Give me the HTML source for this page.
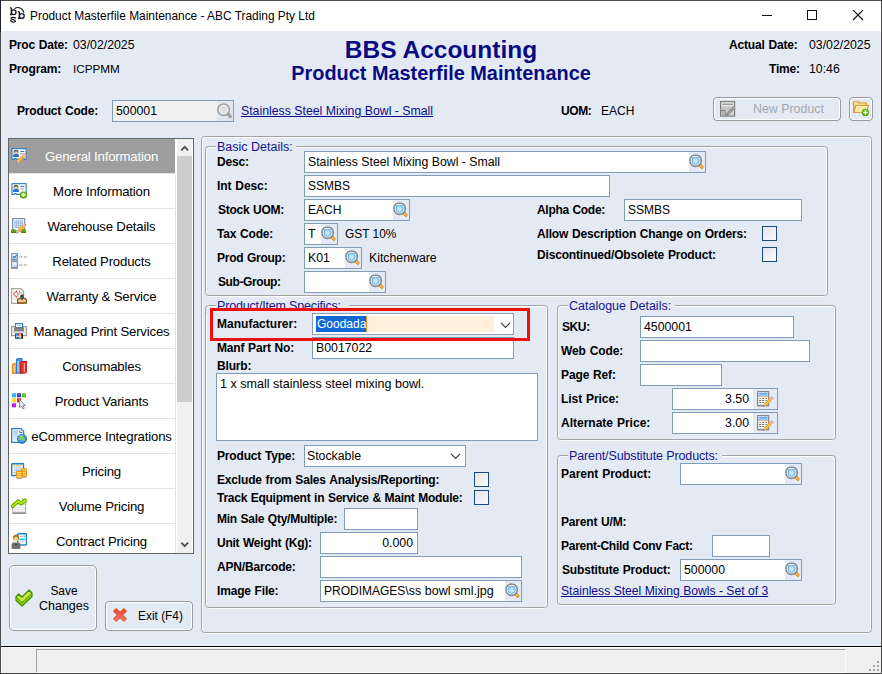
<!DOCTYPE html>
<html><head><meta charset="utf-8"><title>Product Masterfile Maintenance</title>
<style>
*{box-sizing:border-box;margin:0;padding:0}
html,body{width:882px;height:674px;overflow:hidden;background:#e3eaf4}
body{font-family:"Liberation Sans",sans-serif;font-size:12.300px;color:#000;position:relative}
.a{position:absolute;white-space:nowrap}
.lb{position:absolute;white-space:nowrap;font-weight:700;font-size:12px;letter-spacing:-.17px;word-spacing:.6px;line-height:14px;color:#000}
.tx{position:absolute;white-space:nowrap;font-size:12.300px;line-height:14px;color:#000}
.in{position:absolute;background:#fff;border:1px solid #7f9db9;font-size:12.300px;line-height:20px;padding-left:3px;white-space:nowrap;overflow:hidden}
.in.r{text-align:right;padding-right:4px}
.lk{position:absolute;color:#0a0a8c;text-decoration:underline;font-size:12.300px;line-height:14px;white-space:nowrap}
.gb{position:absolute;border:1px solid #a2a2a2;border-radius:3.500px}
.gbw{position:absolute;border:1px solid #fff;border-radius:3.500px}
.lg{position:absolute;padding-left:1px;background:#e3eaf4;color:#15158f;font-size:12.500px;line-height:16px;height:16px;white-space:nowrap;overflow:hidden}
.cb{position:absolute;width:15px;height:15px;border:1px solid #1c4a80;background:linear-gradient(135deg,#e4e4e4,#fbfbfb)}
.mg{position:absolute;right:0;top:0;width:16px;height:20px;background:#e3eaf4}
.li{position:absolute;left:9px;width:166px;height:35px;border-bottom:1px solid #e3e3e3;font-size:13.200px;letter-spacing:-.18px;line-height:36px;text-align:center;padding-left:19px;white-space:nowrap;background:#fff}
.li.sel{background:#9e9e9e;color:#fff}
.btn{position:absolute;border:1px solid #9a9a9a;border-radius:4px;background:#e3eaf4;box-shadow:inset 0 0 0 1px #fff}
</style></head><body>
<div class="a" style="left:0;top:0;width:882px;height:31px;background:#fff"></div>
<svg class="a" style="left:0;top:0" width="32" height="28" viewBox="0 0 32 28"><g fill="none" stroke="#1a1a1a" stroke-width="1.350"><path d="M11.400 7.800v6.700M9.900 7.900h1.500M9.900 14.450h2.200"/><ellipse cx="13.700" cy="12.200" rx="2.300" ry="2.350"/><path d="M19.400 11.600v6.700M17.900 11.700h1.500M17.900 18.250h2.200"/><ellipse cx="21.800" cy="16" rx="2.400" ry="2.400"/><path d="M15.200 18.300c-.4-1.200-4.100-1.500-4.100.2 0 1.600 4.300.7 4.300 2.400 0 1.500-3.900 1.500-4.600-.1M15.200 17v1.600M10.800 19.800v1.700" stroke-width="1.250"/><path d="M14.500 8.700c2.700-2 7.400-1.900 9.400 3.900" stroke-width="1.150"/></g></svg>
<div class="a" style="left:30px;top:8px;font-size:11.900px;line-height:16px;color:#000">Product Masterfile Maintenance - ABC Trading Pty Ltd</div>
<svg class="a" style="left:761px;top:10px" width="12" height="12"><path d="M1 5.500h10" stroke="#111" stroke-width="1"/></svg>
<svg class="a" style="left:806px;top:10px" width="12" height="12"><rect x="1.500" y=".500" width="9" height="9" fill="none" stroke="#111" stroke-width="1"/></svg>
<svg class="a" style="left:852px;top:10px" width="12" height="12"><path d="M1 0l10 10M11 0L1 10" stroke="#111" stroke-width="1.100"/></svg>
<div class="lb" style="left:9px;top:38px;">Proc Date:</div>
<div class="tx" style="left:73px;top:38px;">03/02/2025</div>
<div class="lb" style="left:9px;top:62px;">Program:</div>
<div class="tx" style="left:73px;top:62px;font-size:11.700px">ICPPMM</div>
<div class="a" style="left:0;width:882px;top:34.500px;text-align:center;font-weight:700;font-size:24.500px;line-height:30px;color:#0a0a82">BBS Accounting</div>
<div class="a" style="left:0;width:882px;top:61px;text-align:center;font-weight:700;font-size:19.900px;line-height:24px;color:#0a0a82">Product Masterfile Maintenance</div>
<div class="lb" style="left:729px;top:38px;">Actual Date:</div>
<div class="tx" style="left:809px;top:38px;">03/02/2025</div>
<div class="lb" style="left:769px;top:62px;">Time:</div>
<div class="tx" style="left:809px;top:62px;">10:46</div>
<div class="lb" style="left:17px;top:104px;">Product Code:</div>
<div class="in" style="left:112px;top:100px;width:122px;height:22px;background:#f0f0f0;box-shadow:inset 0 0 0 1px #edf1f7">500001<div class="mg" style="background:#dfe6f0"><svg class="a" style="left:0px;top:0px" width="16" height="20" viewBox="0 0 16 20" ><path d="M10.900 12.800l2.300 2.700" stroke="#a0a0a0" stroke-width="3.400" stroke-linecap="round"/><circle cx="6.600" cy="8.700" r="5.700" fill="#f6f6f6" stroke="#a0a0a0" stroke-width="1.600"/><circle cx="6.600" cy="8.700" r="3.900" fill="#e0e0e0"/></svg></div></div>
<div class="lk" style="left:241px;top:104px">Stainless Steel Mixing Bowl - Small</div>
<div class="lb" style="left:561px;top:104px;letter-spacing:-0.4px;">UOM:</div>
<div class="tx" style="left:601px;top:104px;font-size:12px">EACH</div>
<div class="btn" style="left:713px;top:97px;width:128px;height:24px"></div>
<svg class="a" style="left:720px;top:101px" width="16" height="16" viewBox="0 0 16 16"><rect x=".600" y=".600" width="14" height="14.500" fill="#d4d4d4" stroke="#7c7c7c" stroke-width="1.200"/><rect x="1.500" y="1.500" width="12.200" height="3.800" fill="#ececec"/><rect x="2.200" y="2.500" width="10.800" height="1.600" fill="#a0a0a0"/><rect x="1.500" y="5.500" width="12.200" height="4" fill="#c4c4c4"/><path d="M1 9.500h4.200v5" fill="none" stroke="#7c7c7c" stroke-width="1"/><rect x="1.500" y="10.200" width="3.200" height="4.200" fill="#b0b0b0"/><path d="M6.800 13.700l7.400-7.400" stroke="#8a8a8a" stroke-width="3"/><path d="M6.800 13.700l7.400-7.400" stroke="#dedede" stroke-width="1" stroke-dasharray="1 .6"/><path d="M5.800 14.800l1-2 1 1z" fill="#555"/></svg>
<div class="tx" style="left:753px;top:101.5px;color:#a3a7b2;font-size:12.400px">New Product</div>
<div class="btn" style="left:849px;top:97px;width:24px;height:24px"></div>
<svg class="a" style="left:853px;top:101px" width="17" height="16" viewBox="0 0 17 16"><path d="M.6 11.500V.8h4.500l1 1.200h7.300v2.300" fill="#fbe08a" stroke="#d9963a" stroke-width="1.200" stroke-linejoin="round"/><path d="M.6 11.500l2.300-7h12.600l-2.300 7z" fill="#fce9a0" stroke="#d9963a" stroke-width="1.200" stroke-linejoin="round"/><path d="M1.500 2h3.200M3.300 5.500h10.800" stroke="#fff6cc" stroke-width=".9"/><circle cx="12.4" cy="11.4" r="3.600" fill="#4f9f10"/><circle cx="12.4" cy="10.9" r="2.800" fill="#6cc01c"/><path d="M10.4 11.4h4M12.4 9.4v4" stroke="#fff" stroke-width="1.400"/></svg>
<div class="a" style="left:8px;top:138px;width:186px;height:416px;border:1px solid #666;background:#fff"></div>
<div class="a" style="left:0;top:139px;width:193px;height:414px;overflow:hidden">
<div class="li sel" style="top:0px">General Information<svg class="a" style="left:2px;top:9px" width="16" height="16" viewBox="0 0 16 16" ><path d="M1 .6h14.100v10.800H13.500l-.5-.8h-1.500l-.5.800H5.500l-.5-.8H3.500l-.5.800H1z" fill="#fff" stroke="#3b83c6" stroke-width="1.200" stroke-linejoin="round"/><rect x="2" y="2" width="6" height="7" fill="#bfe0f7"/><circle cx="5" cy="3.600" r="1.900" fill="#7a3d10"/><circle cx="5" cy="4.600" r="1.300" fill="#f4c98a"/><path d="M2.200 9V7.300c0-.7 1.200-1.200 2.800-1.200s2.800.5 2.800 1.200V9z" fill="#2b6fce"/><path d="M9.300 3.500h4" stroke="#2c7bd0" stroke-width="1"/><path d="M9.300 6h3.500" stroke="#8a7f7a" stroke-width="0.900"/><path d="M6.200 12.300L12.300 6.200l2.300 2.300L8.500 14.600z" fill="#f6a623"/><path d="M7.300 13.400l6.100-6.100" stroke="#ffd27a" stroke-width="0.900"/><path d="M12.300 6.200l1.300-1.300 2.300 2.300-1.300 1.300z" fill="#ef8fc4"/><path d="M11.600 6.900l.7-.7 2.300 2.300-.7.700z" fill="#d0d0d0"/><path d="M6.200 12.300L5.300 15.500l3.200-.9z" fill="#e3c08f"/><path d="M5.300 15.500l.4-1.400 1 1z" fill="#444"/></svg></div>
<div class="li" style="top:35px">More Information<svg class="a" style="left:2px;top:9px" width="16" height="16" viewBox="0 0 16 16" ><path d="M1 .6h14.100v10.800H13.500l-.5-.8h-1.500l-.5.800H5.500l-.5-.8H3.500l-.5.800H1z" fill="#fff" stroke="#3b83c6" stroke-width="1.200" stroke-linejoin="round"/><rect x="2" y="2" width="6" height="7" fill="#bfe0f7"/><circle cx="5" cy="3.600" r="1.900" fill="#7a3d10"/><circle cx="5" cy="4.600" r="1.300" fill="#f4c98a"/><path d="M2.200 9V7.300c0-.7 1.200-1.200 2.800-1.200s2.800.5 2.800 1.200V9z" fill="#2b6fce"/><path d="M9.300 3.500h4" stroke="#2c7bd0" stroke-width="1"/><path d="M9.300 6h3.500" stroke="#8a7f7a" stroke-width="0.900"/><circle cx="12.5" cy="12" r="3.600" fill="#4f9f10"/><circle cx="12.5" cy="11.5" r="2.800" fill="#6cc01c"/><path d="M10.5 12h4M12.5 10v4" stroke="#fff" stroke-width="1.400"/></svg></div>
<div class="li" style="top:70px">Warehouse Details<svg class="a" style="left:2px;top:9px" width="16" height="16" viewBox="0 0 16 16" ><rect x="1.600" y=".600" width="12" height="12.500" fill="#f3f7fd" stroke="#7892b4" stroke-width="1.200"/><rect x="3.300" y="2.500" width="8.800" height="7.500" rx="1" fill="#9fb3d6"/><g fill="#e9f0fc"><rect x="4.1" y="3.6" width="1.200" height="1.200"/><rect x="6.1" y="3.6" width="1.200" height="1.200"/><rect x="8.1" y="3.6" width="1.200" height="1.200"/><rect x="10.1" y="3.6" width="1.200" height="1.200"/><rect x="4.1" y="5.7" width="1.200" height="1.200"/><rect x="6.1" y="5.7" width="1.200" height="1.200"/><rect x="8.1" y="5.7" width="1.200" height="1.200"/><rect x="10.1" y="5.7" width="1.200" height="1.200"/><rect x="4.1" y="7.8" width="1.200" height="1.200"/><rect x="6.1" y="7.8" width="1.200" height="1.200"/><rect x="8.1" y="7.8" width="1.200" height="1.200"/><rect x="10.1" y="7.8" width="1.200" height="1.200"/></g><path d="M0 14.500v-1.600c0-1.200 1.200-1.800 2.500-1.800s2.500.6 2.500 1.800v1.600zM10 14.500v-1.600c0-1.200 1-1.800 2.500-1.800s2.500.6 2.500 1.800v1.600z" fill="#62a01c"/><path d="M0 14.500h5M10 14.500h5" stroke="#4d8510" stroke-width="1"/><path d="M6.200 12.300L12.300 6.200l2.300 2.300L8.500 14.600z" fill="#f6a623"/><path d="M7.300 13.400l6.100-6.100" stroke="#ffd27a" stroke-width="0.900"/><path d="M12.300 6.200l1.300-1.300 2.300 2.300-1.300 1.300z" fill="#ef8fc4"/><path d="M11.600 6.900l.7-.7 2.300 2.300-.7.700z" fill="#d0d0d0"/><path d="M6.200 12.300L5.300 15.500l3.200-.9z" fill="#e3c08f"/><path d="M5.300 15.500l.4-1.400 1 1z" fill="#444"/></svg></div>
<div class="li" style="top:105px">Related Products<svg class="a" style="left:2px;top:9px" width="16" height="16" viewBox="0 0 16 16" ><defs><linearGradient id="cbg4" x1="0" y1="0" x2="0" y2="1"><stop offset="0" stop-color="#fff"/><stop offset="1" stop-color="#c4d4ea"/></linearGradient></defs><rect x=".600" y=".600" width="5.800" height="5.800" fill="url(#cbg4)" stroke="#7f9cc4" stroke-width="1.200"/><rect x=".600" y="8.600" width="5.800" height="5.800" fill="url(#cbg4)" stroke="#7f9cc4" stroke-width="1.200"/><path d="M0 7.300h7M0 15.400h7" stroke="#8d8d8d" stroke-width="1"/><path d="M2 3.300l1.400 1.400L5.800 2.200" fill="none" stroke="#1f6fc8" stroke-width="1.200"/><path d="M8 4h4M13 4h3M8 12h4M13 12h3" stroke="#8a8a8a" stroke-width="1.200" stroke-dasharray="1.300 .4"/></svg></div>
<div class="li" style="top:140px">Warranty &amp; Service<svg class="a" style="left:2px;top:9px" width="16" height="16" viewBox="0 0 16 16" ><path d="M.6.600h9.400l2.600 2.800V15.400H.6z" fill="#fff" stroke="#a3a3a3" stroke-width="1.200"/><path d="M2.300 2.500h4v10h-4z" fill="#ececec"/><path d="M8.500 2.300v2.500h3" fill="none" stroke="#a3a3a3" stroke-width="1"/><path d="M5.300 3.300l2.700 2.800-2.600 2.800-3-2.700z" fill="#eafcff" stroke="#ef1c1c" stroke-width="1.100" stroke-dasharray="1 .7"/><rect x="9.400" y="6.200" width="3.300" height="5" rx="1.500" fill="#3c3f45"/><path d="M6.600 15v-2.400c0-1.400 1-2.200 2.400-2.200h4.100c1.400 0 2.400.8 2.400 2.200V15z" fill="#f0c88c" stroke="#8a5514" stroke-width="1.300"/><rect x="10.300" y="9" width="1.500" height="3" fill="#27598c"/></svg></div>
<div class="li" style="top:175px">Managed Print Services<svg class="a" style="left:2px;top:9px" width="16" height="16" viewBox="0 0 16 16" ><rect x=".600" y="3.600" width="14.800" height="9" fill="#f0f0f0" stroke="#9c9c9c" stroke-width="1.200"/><rect x="4.500" y=".600" width="7" height="4" fill="#fff" stroke="#3c83c8" stroke-width="1.200"/><path d="M6.300 2.600h3.500" stroke="#9cc6ee" stroke-width="0.900"/><rect x="3" y="4.500" width="10" height="4" fill="#7b7b7b"/><path d="M3 6.300h10" stroke="#999" stroke-width="0.700"/><rect x="2.500" y="8.500" width="11" height="1.500" fill="#d0d0d8"/><rect x="4" y="10.500" width="8" height="5" fill="#222"/><rect x="4.600" y="11" width="1.800" height="4" fill="#00a2f2"/><rect x="6.400" y="11" width="1.800" height="4" fill="#ee0a9a"/><rect x="8.200" y="11" width="1.800" height="4" fill="#ffe600"/><path d="M5 13.200h5.500" stroke="#fff" stroke-width="1"/><path d="M4 15.400h8" stroke="#3c83c8" stroke-width="1"/></svg></div>
<div class="li" style="top:210px">Consumables<svg class="a" style="left:2px;top:9px" width="16" height="16" viewBox="0 0 16 16" ><path d="M1 15.500h13.500" stroke="#8aa" stroke-width="0.800"/><path d="M1.500 15V7c0-1 .8-1.500 2-1.500s2 .5 2 1.500v8z" fill="#f8b34a" stroke="#ee8208" stroke-width="1.200"/><path d="M3.300 8v6.500" stroke="#ffd898" stroke-width="1"/><path d="M5.500 15V2l1-1.500h4.500V15z" fill="#4d9be0" stroke="#2b78c4" stroke-width="1.200"/><path d="M7 3v11.500" stroke="#bfe2ff" stroke-width="1.200"/><path d="M9.700 15V5l1.300-1.500h4.300V14l-1 1z" fill="#f0392b" stroke="#d60d0d" stroke-width="1.200"/><path d="M13.400 5v9.500" stroke="#ffb4ae" stroke-width="1"/></svg></div>
<div class="li" style="top:245px">Product Variants<svg class="a" style="left:2px;top:9px" width="16" height="16" viewBox="0 0 16 16" ><rect x="1" y=".300" width="4" height="4" fill="#22aaff"/><rect x="6" y=".300" width="4" height="4" fill="#2a35cf"/><rect x="11" y=".300" width="4" height="4" fill="#66bb0a"/><rect x="1" y="5.300" width="4" height="4" fill="#ffd80a"/><rect x="6" y="5.300" width="4" height="4" fill="#e8330f"/><rect x="1" y="10.300" width="4" height="4" fill="#aa18ee"/><g fill="#ffffff" fill-opacity=".45"><rect x="2.200" y="1.500" width="1.600" height="1"/><rect x="7.200" y="1.500" width="1.600" height="1"/><rect x="12.200" y="1.500" width="1.600" height="1"/><rect x="2.200" y="6.500" width="1.600" height="1"/><rect x="2.200" y="11.500" width="1.600" height="1"/></g><path d="M8.500 6.500v8.300l2-1.700 1.300 2.800 1.500-.7-1.300-2.700h2.500z" fill="#e4e8ea" stroke="#8a9094" stroke-width="1"/></svg></div>
<div class="li" style="top:280px">eCommerce Integrations<svg class="a" style="left:2px;top:9px" width="16" height="16" viewBox="0 0 16 16" ><defs><linearGradient id="pwg9" x1="0" y1="0" x2="0" y2="1"><stop offset="0" stop-color="#9fcbe6"/><stop offset="1" stop-color="#e8f4fb"/></linearGradient><radialGradient id="glb9" cx=".4" cy=".35" r=".7"><stop offset="0" stop-color="#7cc6ff"/><stop offset="1" stop-color="#1a78d8"/></radialGradient></defs><path d="M.7.700h9.300l2.700 2.700V14.300H.7z" fill="#fff" stroke="#2b7ec2" stroke-width="1.300"/><rect x="2.300" y="2.400" width="4.800" height="10.300" fill="url(#pwg9)"/><path d="M8.800 2.200v2.300h2.500" fill="none" stroke="#2b7ec2" stroke-width="1"/><circle cx="11" cy="10.800" r="4.600" fill="url(#glb9)" stroke="#1a6ec6" stroke-width=".8"/><path d="M9 8.300c1-.8 2.500-.9 3.300-.2.500.6-.3 1.200-.2 1.800.2.700 1.700.5 1.900 1.300.2.900-.8 2.100-1.500 2.300-.6.100-.5-1-1-1.500-.5-.6-1.500-.6-2-1.400-.4-.7-.9-1.800-.5-2.300z" fill="#8ed422"/><circle cx="8.100" cy="11.500" r=".8" fill="#8ed422"/></svg></div>
<div class="li" style="top:315px">Pricing<svg class="a" style="left:2px;top:9px" width="16" height="16" viewBox="0 0 16 16" ><rect x=".700" y=".700" width="11.800" height="11.800" fill="#fff" stroke="#1c7cc6" stroke-width="1.400" rx=".5"/><path d="M2.300 2.600h2M5.300 2.600h2M8.300 2.600h2" stroke="#f8b818" stroke-width="1.200"/><path d="M2.300 4.800h8.500M2.300 7.200h8.500M2.300 9.600h8.500" stroke="#9cc4ec" stroke-width="1"/><path d="M5 3v8M8 3v8" stroke="#9cc4ec" stroke-width=".8"/><rect x="3.300" y="4.300" width="1.500" height="1.200" fill="#d8ecff"/><rect x="6" y="4.300" width="1.500" height="1.200" fill="#d8ecff"/><g><rect x="10.200" y="5.500" width="5.500" height="8" rx="1.200" fill="#f4a01e" stroke="#ee8a0a" stroke-width=".8"/><path d="M11.200 7h3.500M11.200 9.500h3.500M11.200 12h3.500" stroke="#ffe060" stroke-width="1.200"/><rect x="5.300" y="8" width="6" height="7" rx="1.200" fill="#f4a01e" stroke="#ee8a0a" stroke-width=".8"/><path d="M6.300 9.500h4M6.300 11.700h4M6.300 13.800h4" stroke="#ffe868" stroke-width="1.200"/><path d="M5.500 15.700h5.500M12 14.200h3.500" stroke="#8c8c8c" stroke-width=".8"/></g></svg></div>
<div class="li" style="top:350px">Volume Pricing<svg class="a" style="left:2px;top:9px" width="16" height="16" viewBox="0 0 16 16" ><rect x="1.600" y="6" width="13" height="9" fill="#fff" stroke="#b4b4b4" stroke-width="1.200"/><path d="M2.500 9.500h11.500M2.500 11.500h11.500M2.500 13.300h11.500" stroke="#d8d8d8" stroke-width=".8"/><path d="M1.600 15.200h13" stroke="#8e8e8e" stroke-width="1.600"/><path d="M1.800 8.300l5.300-5.300 3 2.700 3.400-3.200" fill="none" stroke="#5a9a00" stroke-width="3.600" stroke-linejoin="round" stroke-linecap="round"/><path d="M10.500.800h5v5z" fill="#5a9a00"/><path d="M1.800 8.300l5.300-5.300 3 2.700 3.400-3.200" fill="none" stroke="#b6ea0a" stroke-width="1.800" stroke-linejoin="round" stroke-linecap="round"/><path d="M12 1.700h2.600v2.600z" fill="#c6f41c"/></svg></div>
<div class="li" style="top:385px">Contract Pricing<svg class="a" style="left:2px;top:9px" width="16" height="16" viewBox="0 0 16 16" ><rect x="6.700" y=".700" width="8.700" height="11.300" rx="1" fill="#fff" stroke="#1c86c8" stroke-width="1.400"/><path d="M8.500 3.300h3.500" stroke="#b89aa0" stroke-width=".9"/><circle cx="13.300" cy="3.300" r=".9" fill="#1ec4f0"/><rect x="8.300" y="5.400" width="5.700" height="1.800" fill="#1ec4f0"/><path d="M8.500 8.700h4.500" stroke="#e0a0a0" stroke-width=".7"/><path d="M.6 15.300v-3.500c0-1.500 1.200-2.400 2.400-2.600h4c1.200.2 2.400 1.100 2.400 2.600v3.500z" fill="#6e6e6e"/><path d="M.6 15.600h8.800" stroke="#555" stroke-width=".8"/><path d="M3.500 9.200L5 12l1.500-2.800z" fill="#fff"/><path d="M4.600 9.500h.8l.3 2.300-.7.700-.7-.7z" fill="#111"/><ellipse cx="5" cy="4.800" rx="2.900" ry="3" fill="#b4651a"/><ellipse cx="5" cy="6.200" rx="2" ry="2.400" fill="#f6d680"/><path d="M2.300 4.500c.5-2 4.800-2.300 5.400 0-1.500-.9-3.500-1-5.400 0z" fill="#c87820"/></svg></div>
</div>
<div class="a" style="left:175px;top:139px;width:18px;height:414px;background:#fff"></div><div class="a" style="left:177px;top:139px;width:15px;height:414px;background:#f0f0f0"></div>
<div class="a" style="left:175px;top:174px;width:1px;height:379px;background:#e3e3e3"></div>
<div class="a" style="left:177px;top:156px;width:15px;height:246px;background:#cdcdcd"></div>
<svg class="a" style="left:180px;top:144px" width="10" height="8"><path d="M1.300 6.300l3.400-3.400 3.400 3.400" fill="none" stroke="#505050" stroke-width="1.900"/></svg>
<svg class="a" style="left:180px;top:541px" width="10" height="8"><path d="M1.300 1.700l3.400 3.400 3.400-3.400" fill="none" stroke="#505050" stroke-width="1.900"/></svg>
<div class="btn" style="left:9px;top:565px;width:88px;height:66px;border-radius:5px"></div>
<svg class="a" style="left:15px;top:589px" width="18" height="18" viewBox="0 0 18 18"><path d="M1 8L3.800 5.200 7 8.200 14 1.200 17 4V7.500L7 17 1 11.300z" fill="#98cc08" stroke="#3f8f00" stroke-width="1.200" stroke-linejoin="round"/><path d="M1 8L3.800 5.200 7 8.200 14 1.200 17 4 7 13.500z" fill="#c6e845"/><path d="M1 8l6 5.500L17 4" fill="none" stroke="#4c9c00" stroke-width="1"/><path d="M1 8L3.800 5.200 7 8.200 14 1.200 17 4" fill="none" stroke="#3f8f00" stroke-width="1.200" stroke-linejoin="round"/></svg>
<div class="tx" style="left:34px;width:60px;top:583.500px;text-align:center;line-height:15px;font-size:12.500px;white-space:normal"><span style="font-size:11.900px">Save</span><br>Changes</div>
<div class="btn" style="left:105px;top:601px;width:88px;height:30px"></div>
<svg class="a" style="left:113px;top:608px" width="14" height="14" viewBox="0 0 14 14"><defs><linearGradient id="xg" x1="0" y1="0" x2="0" y2="1"><stop offset="0" stop-color="#e8401f"/><stop offset="1" stop-color="#f6806c"/></linearGradient></defs><path d="M3.200 .4L7 4.200 10.800 .4 13.600 3.200 9.800 7 13.600 10.800 10.800 13.600 7 9.800 3.200 13.600 .4 10.800 4.200 7 .4 3.200z" fill="url(#xg)" stroke="#dc3a26" stroke-width=".8" stroke-linejoin="round"/></svg>
<div class="tx" style="left:138px;top:608.5px;font-size:11.900px">Exit (F4)</div>
<div class="gbw" style="left:202px;top:137px;width:669px;height:497px"></div>
<div class="gb" style="left:201px;top:136px;width:671px;height:497px"></div>
<div class="gbw" style="left:206px;top:147px;width:621px;height:150px"></div>
<div class="gb" style="left:205px;top:146px;width:623px;height:150px"></div>
<div class="lg" style="left:216px;top:139px;width:80px;letter-spacing:0px">Basic Details:</div>
<div class="lb" style="left:217px;top:155px;">Desc:</div>
<div class="in" style="left:304px;top:151px;width:402px;height:22px;">Stainless Steel Mixing Bowl - Small<div class="mg"><svg class="a" style="left:0px;top:0px" width="16" height="20" viewBox="0 0 16 20" ><defs><radialGradient id="lens13" cx=".6" cy=".65" r=".75"><stop offset="0" stop-color="#cdf3fc"/><stop offset="1" stop-color="#8ccef6"/></radialGradient></defs><path d="M11 12.900l1.900 2.200" stroke="#d4881a" stroke-width="3.300" stroke-linecap="round"/><path d="M11.800 13.700l1.100 1.300" stroke="#fcca64" stroke-width="1.400" stroke-linecap="round"/><circle cx="6.600" cy="8.700" r="5.700" fill="#fff" stroke="#8a8a8a" stroke-width="1.600"/><circle cx="6.600" cy="8.700" r="3.750" fill="url(#lens13)" stroke="#4a9eec" stroke-width=".8"/></svg></div></div>
<div class="lb" style="left:217px;top:179px;letter-spacing:-0.07px;">Int Desc:</div>
<div class="in" style="left:304px;top:175px;width:306px;height:22px;"><span style="font-size:12px">SSMBS</span></div>
<div class="lb" style="left:218px;top:203px;letter-spacing:-0.25px;">Stock UOM:</div>
<div class="in" style="left:304px;top:199px;width:106px;height:22px;"><span style="font-size:12px">EACH</span><div class="mg"><svg class="a" style="left:0px;top:0px" width="16" height="20" viewBox="0 0 16 20" ><defs><radialGradient id="lens14" cx=".6" cy=".65" r=".75"><stop offset="0" stop-color="#cdf3fc"/><stop offset="1" stop-color="#8ccef6"/></radialGradient></defs><path d="M11 12.900l1.900 2.200" stroke="#d4881a" stroke-width="3.300" stroke-linecap="round"/><path d="M11.800 13.700l1.100 1.300" stroke="#fcca64" stroke-width="1.400" stroke-linecap="round"/><circle cx="6.600" cy="8.700" r="5.700" fill="#fff" stroke="#8a8a8a" stroke-width="1.600"/><circle cx="6.600" cy="8.700" r="3.750" fill="url(#lens14)" stroke="#4a9eec" stroke-width=".8"/></svg></div></div>
<div class="lb" style="left:217px;top:227px;">Tax Code:</div>
<div class="in" style="left:304px;top:223px;width:34px;height:22px;">T<div class="mg"><svg class="a" style="left:0px;top:0px" width="16" height="20" viewBox="0 0 16 20" ><defs><radialGradient id="lens15" cx=".6" cy=".65" r=".75"><stop offset="0" stop-color="#cdf3fc"/><stop offset="1" stop-color="#8ccef6"/></radialGradient></defs><path d="M11 12.900l1.900 2.200" stroke="#d4881a" stroke-width="3.300" stroke-linecap="round"/><path d="M11.800 13.700l1.100 1.300" stroke="#fcca64" stroke-width="1.400" stroke-linecap="round"/><circle cx="6.600" cy="8.700" r="5.700" fill="#fff" stroke="#8a8a8a" stroke-width="1.600"/><circle cx="6.600" cy="8.700" r="3.750" fill="url(#lens15)" stroke="#4a9eec" stroke-width=".8"/></svg></div></div>
<div class="tx" style="left:345px;top:227px;font-size:11.900px">GST 10%</div>
<div class="lb" style="left:217px;top:251px;letter-spacing:-0.26px;">Prod Group:</div>
<div class="in" style="left:304px;top:247px;width:58px;height:22px;">K01<div class="mg"><svg class="a" style="left:0px;top:0px" width="16" height="20" viewBox="0 0 16 20" ><defs><radialGradient id="lens16" cx=".6" cy=".65" r=".75"><stop offset="0" stop-color="#cdf3fc"/><stop offset="1" stop-color="#8ccef6"/></radialGradient></defs><path d="M11 12.900l1.900 2.200" stroke="#d4881a" stroke-width="3.300" stroke-linecap="round"/><path d="M11.800 13.700l1.100 1.300" stroke="#fcca64" stroke-width="1.400" stroke-linecap="round"/><circle cx="6.600" cy="8.700" r="5.700" fill="#fff" stroke="#8a8a8a" stroke-width="1.600"/><circle cx="6.600" cy="8.700" r="3.750" fill="url(#lens16)" stroke="#4a9eec" stroke-width=".8"/></svg></div></div>
<div class="tx" style="left:369px;top:251px;">Kitchenware</div>
<div class="lb" style="left:218px;top:275px;letter-spacing:-0.4px;">Sub-Group:</div>
<div class="in" style="left:304px;top:271px;width:82px;height:22px;"><div class="mg"><svg class="a" style="left:0px;top:0px" width="16" height="20" viewBox="0 0 16 20" ><defs><radialGradient id="lens17" cx=".6" cy=".65" r=".75"><stop offset="0" stop-color="#cdf3fc"/><stop offset="1" stop-color="#8ccef6"/></radialGradient></defs><path d="M11 12.900l1.900 2.200" stroke="#d4881a" stroke-width="3.300" stroke-linecap="round"/><path d="M11.800 13.700l1.100 1.300" stroke="#fcca64" stroke-width="1.400" stroke-linecap="round"/><circle cx="6.600" cy="8.700" r="5.700" fill="#fff" stroke="#8a8a8a" stroke-width="1.600"/><circle cx="6.600" cy="8.700" r="3.750" fill="url(#lens17)" stroke="#4a9eec" stroke-width=".8"/></svg></div></div>
<div class="lb" style="left:537px;top:203px;letter-spacing:-0.3px;">Alpha Code:</div>
<div class="in" style="left:624px;top:199px;width:178px;height:22px;"><span style="font-size:12px">SSMBS</span></div>
<div class="lb" style="left:537px;top:227px;">Allow Description Change on Orders:</div>
<div class="cb" style="left:762px;top:226px"></div>
<div class="lb" style="left:537px;top:248px;">Discontinued/Obsolete Product:</div>
<div class="cb" style="left:762px;top:247px"></div>
<div class="gbw" style="left:206px;top:306px;width:341px;height:303px"></div>
<div class="gb" style="left:205px;top:305px;width:343px;height:303px"></div>
<div class="lg" style="left:216px;top:298px;width:133px;letter-spacing:-0.17px">Product/Item Specifics:</div>
<div class="gbw" style="left:558px;top:306px;width:277px;height:135px"></div>
<div class="gb" style="left:557px;top:305px;width:279px;height:135px"></div>
<div class="lg" style="left:568px;top:298px;width:107px;letter-spacing:0px">Catalogue Details:</div>
<div class="gbw" style="left:558px;top:456px;width:277px;height:150px"></div>
<div class="gb" style="left:557px;top:455px;width:279px;height:150px"></div>
<div class="lg" style="left:568px;top:448px;width:154px;letter-spacing:-0.12px">Parent/Substitute Products:</div>
<div class="in" style="left:312px;top:337px;width:202px;height:22px">B0017022</div>
<div class="a" style="left:206px;top:308px;width:340px;height:6px;background:#e3eaf4"></div>
<div class="a" style="left:210px;top:308px;width:320px;height:33px;border:3px solid #ee0f0f"></div>
<div class="lb" style="left:217px;top:317px;letter-spacing:0.02px;">Manufacturer:</div>
<div class="in" style="left:312px;top:313px;width:202px;height:22px;border-color:#8aa2c2;padding:0"><span style="position:absolute;left:3px;top:2px;width:178px;height:16px;background:#fff0dc"></span><span style="position:absolute;left:3px;top:2px;height:16px;font-size:12px;line-height:16px;padding-left:1px;background:#0f68d4;color:#fff;border-right:1px solid #ee8a1c">Goodada</span><svg class="a" style="left:187px;top:8px" width="11" height="7"><path d="M1 .800l4.500 4.500L10 .8" fill="none" stroke="#3c3c3c" stroke-width="1.200"/></svg></div>
<div class="lb" style="left:217px;top:341px;">Manf Part No:</div>
<div class="lb" style="left:217px;top:359px;">Blurb:</div>
<div class="in" style="left:216px;top:373px;width:322px;height:68px;line-height:21px;font-size:12.550px">1 x small stainless steel mixing bowl.</div>
<div class="lb" style="left:217px;top:449px;">Product Type:</div>
<div class="in" style="left:304px;top:445px;width:162px;height:22px;padding-left:2px;line-height:21px">Stockable<svg class="a" style="left:145px;top:7px" width="11" height="7"><path d="M1 .800l4.500 4.500L10 .8" fill="none" stroke="#3c3c3c" stroke-width="1.200"/></svg></div>
<div class="lb" style="left:217px;top:473px;">Exclude from Sales Analysis/Reporting:</div>
<div class="cb" style="left:474px;top:472px"></div>
<div class="lb" style="left:217px;top:491px;letter-spacing:-0.26px;">Track Equipment in Service &amp; Maint Module:</div>
<div class="cb" style="left:474px;top:490px"></div>
<div class="lb" style="left:217px;top:512px;letter-spacing:-0.26px;">Min Sale Qty/Multiple:</div>
<div class="in" style="left:344px;top:508px;width:74px;height:22px;"></div>
<div class="lb" style="left:217px;top:536px;letter-spacing:-0.25px;">Unit Weight (Kg):</div>
<div class="in r" style="left:320px;top:532px;width:98px;height:22px;">0.000</div>
<div class="lb" style="left:217px;top:560px;">APN/Barcode:</div>
<div class="in" style="left:320px;top:556px;width:202px;height:22px;"></div>
<div class="lb" style="left:217px;top:584px;">Image File:</div>
<div class="in" style="left:320px;top:580px;width:202px;height:22px;"><span style="font-size:12px">PRODIMAGES</span><span style="font-size:12.500px">\ss bowl sml.jpg</span><div class="mg"><svg class="a" style="left:0px;top:0px" width="16" height="20" viewBox="0 0 16 20" ><defs><radialGradient id="lens18" cx=".6" cy=".65" r=".75"><stop offset="0" stop-color="#cdf3fc"/><stop offset="1" stop-color="#8ccef6"/></radialGradient></defs><path d="M11 12.900l1.900 2.200" stroke="#d4881a" stroke-width="3.300" stroke-linecap="round"/><path d="M11.800 13.700l1.100 1.300" stroke="#fcca64" stroke-width="1.400" stroke-linecap="round"/><circle cx="6.600" cy="8.700" r="5.700" fill="#fff" stroke="#8a8a8a" stroke-width="1.600"/><circle cx="6.600" cy="8.700" r="3.750" fill="url(#lens18)" stroke="#4a9eec" stroke-width=".8"/></svg></div></div>
<div class="lb" style="left:562px;top:320px;letter-spacing:-0.4px;">SKU:</div>
<div class="in" style="left:640px;top:316px;width:154px;height:22px;">4500001</div>
<div class="lb" style="left:561px;top:344px;letter-spacing:-0.1px;">Web Code:</div>
<div class="in" style="left:640px;top:340px;width:170px;height:22px;"></div>
<div class="lb" style="left:561px;top:368px;letter-spacing:-0.12px;">Page Ref:</div>
<div class="in" style="left:640px;top:364px;width:82px;height:22px;"></div>
<div class="lb" style="left:561px;top:392px;letter-spacing:-0.06px;">List Price:</div>
<div class="in r" style="left:672px;top:388px;width:106px;height:22px;padding-right:28px">3.50<div class="mg" style="width:24px"><svg class="a" style="left:4px;top:2px" width="16" height="16" viewBox="0 0 16 16" ><rect x=".600" y=".600" width="11" height="14" fill="#fff" stroke="#8c8784" stroke-width="1.200"/><rect x="1.400" y="1.500" width="9.400" height="3" fill="#8ec4fa"/><path d="M2.300 3h7.500" stroke="#4a98ec" stroke-width=".8"/><path d="M1 5.200h10.200" stroke="#8c8784" stroke-width=".8"/><g><rect x="2.200" y="7" width="2" height="1" fill="#ff6a14"/><rect x="5.200" y="7" width="2" height="1" fill="#666"/><rect x="8.200" y="7" width="2" height="1" fill="#ff6a14"/><rect x="2.200" y="9" width="2" height="1" fill="#666"/><rect x="5.200" y="9" width="2" height="1" fill="#666"/><rect x="8.200" y="9" width="2" height="1" fill="#3c96f0"/><rect x="2.200" y="11" width="2" height="1" fill="#666"/><rect x="5.200" y="11" width="2" height="1" fill="#666"/></g><path d="M.6 14.500h11" stroke="#8c8784" stroke-width="1.600"/></svg><svg class="a" style="left:5px;top:2px" width="16" height="16" viewBox="0 0 16 16"><path d="M6.200 12.300L12.300 6.200l2.300 2.300L8.500 14.600z" fill="#f6a623"/><path d="M7.300 13.400l6.100-6.100" stroke="#ffd27a" stroke-width="0.900"/><path d="M12.300 6.200l1.300-1.300 2.300 2.300-1.300 1.300z" fill="#ef8fc4"/><path d="M11.600 6.900l.7-.7 2.300 2.300-.7.700z" fill="#d0d0d0"/><path d="M6.200 12.300L5.300 15.500l3.200-.9z" fill="#e3c08f"/><path d="M5.300 15.500l.4-1.400 1 1z" fill="#444"/></svg></div></div>
<div class="lb" style="left:561px;top:416px;letter-spacing:0px;">Alternate Price:</div>
<div class="in r" style="left:672px;top:412px;width:106px;height:22px;padding-right:28px">3.00<div class="mg" style="width:24px"><svg class="a" style="left:4px;top:2px" width="16" height="16" viewBox="0 0 16 16" ><rect x=".600" y=".600" width="11" height="14" fill="#fff" stroke="#8c8784" stroke-width="1.200"/><rect x="1.400" y="1.500" width="9.400" height="3" fill="#8ec4fa"/><path d="M2.300 3h7.500" stroke="#4a98ec" stroke-width=".8"/><path d="M1 5.200h10.200" stroke="#8c8784" stroke-width=".8"/><g><rect x="2.200" y="7" width="2" height="1" fill="#ff6a14"/><rect x="5.200" y="7" width="2" height="1" fill="#666"/><rect x="8.200" y="7" width="2" height="1" fill="#ff6a14"/><rect x="2.200" y="9" width="2" height="1" fill="#666"/><rect x="5.200" y="9" width="2" height="1" fill="#666"/><rect x="8.200" y="9" width="2" height="1" fill="#3c96f0"/><rect x="2.200" y="11" width="2" height="1" fill="#666"/><rect x="5.200" y="11" width="2" height="1" fill="#666"/></g><path d="M.6 14.500h11" stroke="#8c8784" stroke-width="1.600"/></svg><svg class="a" style="left:5px;top:2px" width="16" height="16" viewBox="0 0 16 16"><path d="M6.200 12.300L12.300 6.200l2.300 2.300L8.500 14.600z" fill="#f6a623"/><path d="M7.300 13.400l6.100-6.100" stroke="#ffd27a" stroke-width="0.900"/><path d="M12.300 6.200l1.300-1.300 2.300 2.300-1.300 1.300z" fill="#ef8fc4"/><path d="M11.600 6.900l.7-.7 2.300 2.300-.7.700z" fill="#d0d0d0"/><path d="M6.200 12.300L5.300 15.500l3.200-.9z" fill="#e3c08f"/><path d="M5.300 15.500l.4-1.400 1 1z" fill="#444"/></svg></div></div>
<div class="lb" style="left:561px;top:467px;letter-spacing:-0.02px;">Parent Product:</div>
<div class="in" style="left:680px;top:463px;width:122px;height:22px;"><div class="mg"><svg class="a" style="left:0px;top:0px" width="16" height="20" viewBox="0 0 16 20" ><defs><radialGradient id="lens19" cx=".6" cy=".65" r=".75"><stop offset="0" stop-color="#cdf3fc"/><stop offset="1" stop-color="#8ccef6"/></radialGradient></defs><path d="M11 12.900l1.900 2.200" stroke="#d4881a" stroke-width="3.300" stroke-linecap="round"/><path d="M11.800 13.700l1.100 1.300" stroke="#fcca64" stroke-width="1.400" stroke-linecap="round"/><circle cx="6.600" cy="8.700" r="5.700" fill="#fff" stroke="#8a8a8a" stroke-width="1.600"/><circle cx="6.600" cy="8.700" r="3.750" fill="url(#lens19)" stroke="#4a9eec" stroke-width=".8"/></svg></div></div>
<div class="lb" style="left:561px;top:515px;">Parent U/M:</div>
<div class="lb" style="left:561px;top:539px;letter-spacing:-0.27px;">Parent-Child Conv Fact:</div>
<div class="in" style="left:712px;top:535px;width:58px;height:22px;"></div>
<div class="lb" style="left:562px;top:563px;">Substitute Product:</div>
<div class="in" style="left:680px;top:559px;width:122px;height:22px;">500000<div class="mg"><svg class="a" style="left:0px;top:0px" width="16" height="20" viewBox="0 0 16 20" ><defs><radialGradient id="lens20" cx=".6" cy=".65" r=".75"><stop offset="0" stop-color="#cdf3fc"/><stop offset="1" stop-color="#8ccef6"/></radialGradient></defs><path d="M11 12.900l1.900 2.200" stroke="#d4881a" stroke-width="3.300" stroke-linecap="round"/><path d="M11.800 13.700l1.100 1.300" stroke="#fcca64" stroke-width="1.400" stroke-linecap="round"/><circle cx="6.600" cy="8.700" r="5.700" fill="#fff" stroke="#8a8a8a" stroke-width="1.600"/><circle cx="6.600" cy="8.700" r="3.750" fill="url(#lens20)" stroke="#4a9eec" stroke-width=".8"/></svg></div></div>
<div class="lk" style="left:561px;top:584px;font-size:12.150px">Stainless Steel Mixing Bowls - Set of 3</div>
<div class="a" style="left:0;top:646px;width:882px;height:1px;background:#000"></div>
<div class="a" style="left:0;top:647px;width:882px;height:27px;background:#f0f0f0"></div>
<div class="a" style="left:36px;top:649px;width:810px;height:24px;border-left:1px solid #a0a0a0;border-top:1px solid #a0a0a0;border-right:1px solid #fff;border-bottom:1px solid #fff"></div>
<svg class="a" style="left:869px;top:661px" width="11" height="11"><g fill="#a6a6a6"><rect x="8" y="0" width="2" height="2"/><rect x="4" y="4" width="2" height="2"/><rect x="8" y="4" width="2" height="2"/><rect x="0" y="8" width="2" height="2"/><rect x="4" y="8" width="2" height="2"/><rect x="8" y="8" width="2" height="2"/></g></svg>
<div class="a" style="left:1px;top:31px;width:880px;height:615px;border:1px solid #ebf1fb;border-top:none"></div>
<div class="a" style="left:1px;top:647px;width:880px;height:26px;border-left:1px solid #fff;border-top:1px solid #fff"></div>
<div class="a" style="left:0;top:0;width:882px;height:1px;background:#4a4a4a"></div>
<div class="a" style="left:0;top:673px;width:882px;height:1px;background:#4a4a4a"></div>
<div class="a" style="left:0;top:0;width:1px;height:32px;background:#1a2030"></div>
<div class="a" style="left:0;top:32px;width:1px;height:642px;background:#4a4a4a"></div>
<div class="a" style="left:881px;top:0;width:1px;height:674px;background:#4a4a4a"></div>
</body></html>
